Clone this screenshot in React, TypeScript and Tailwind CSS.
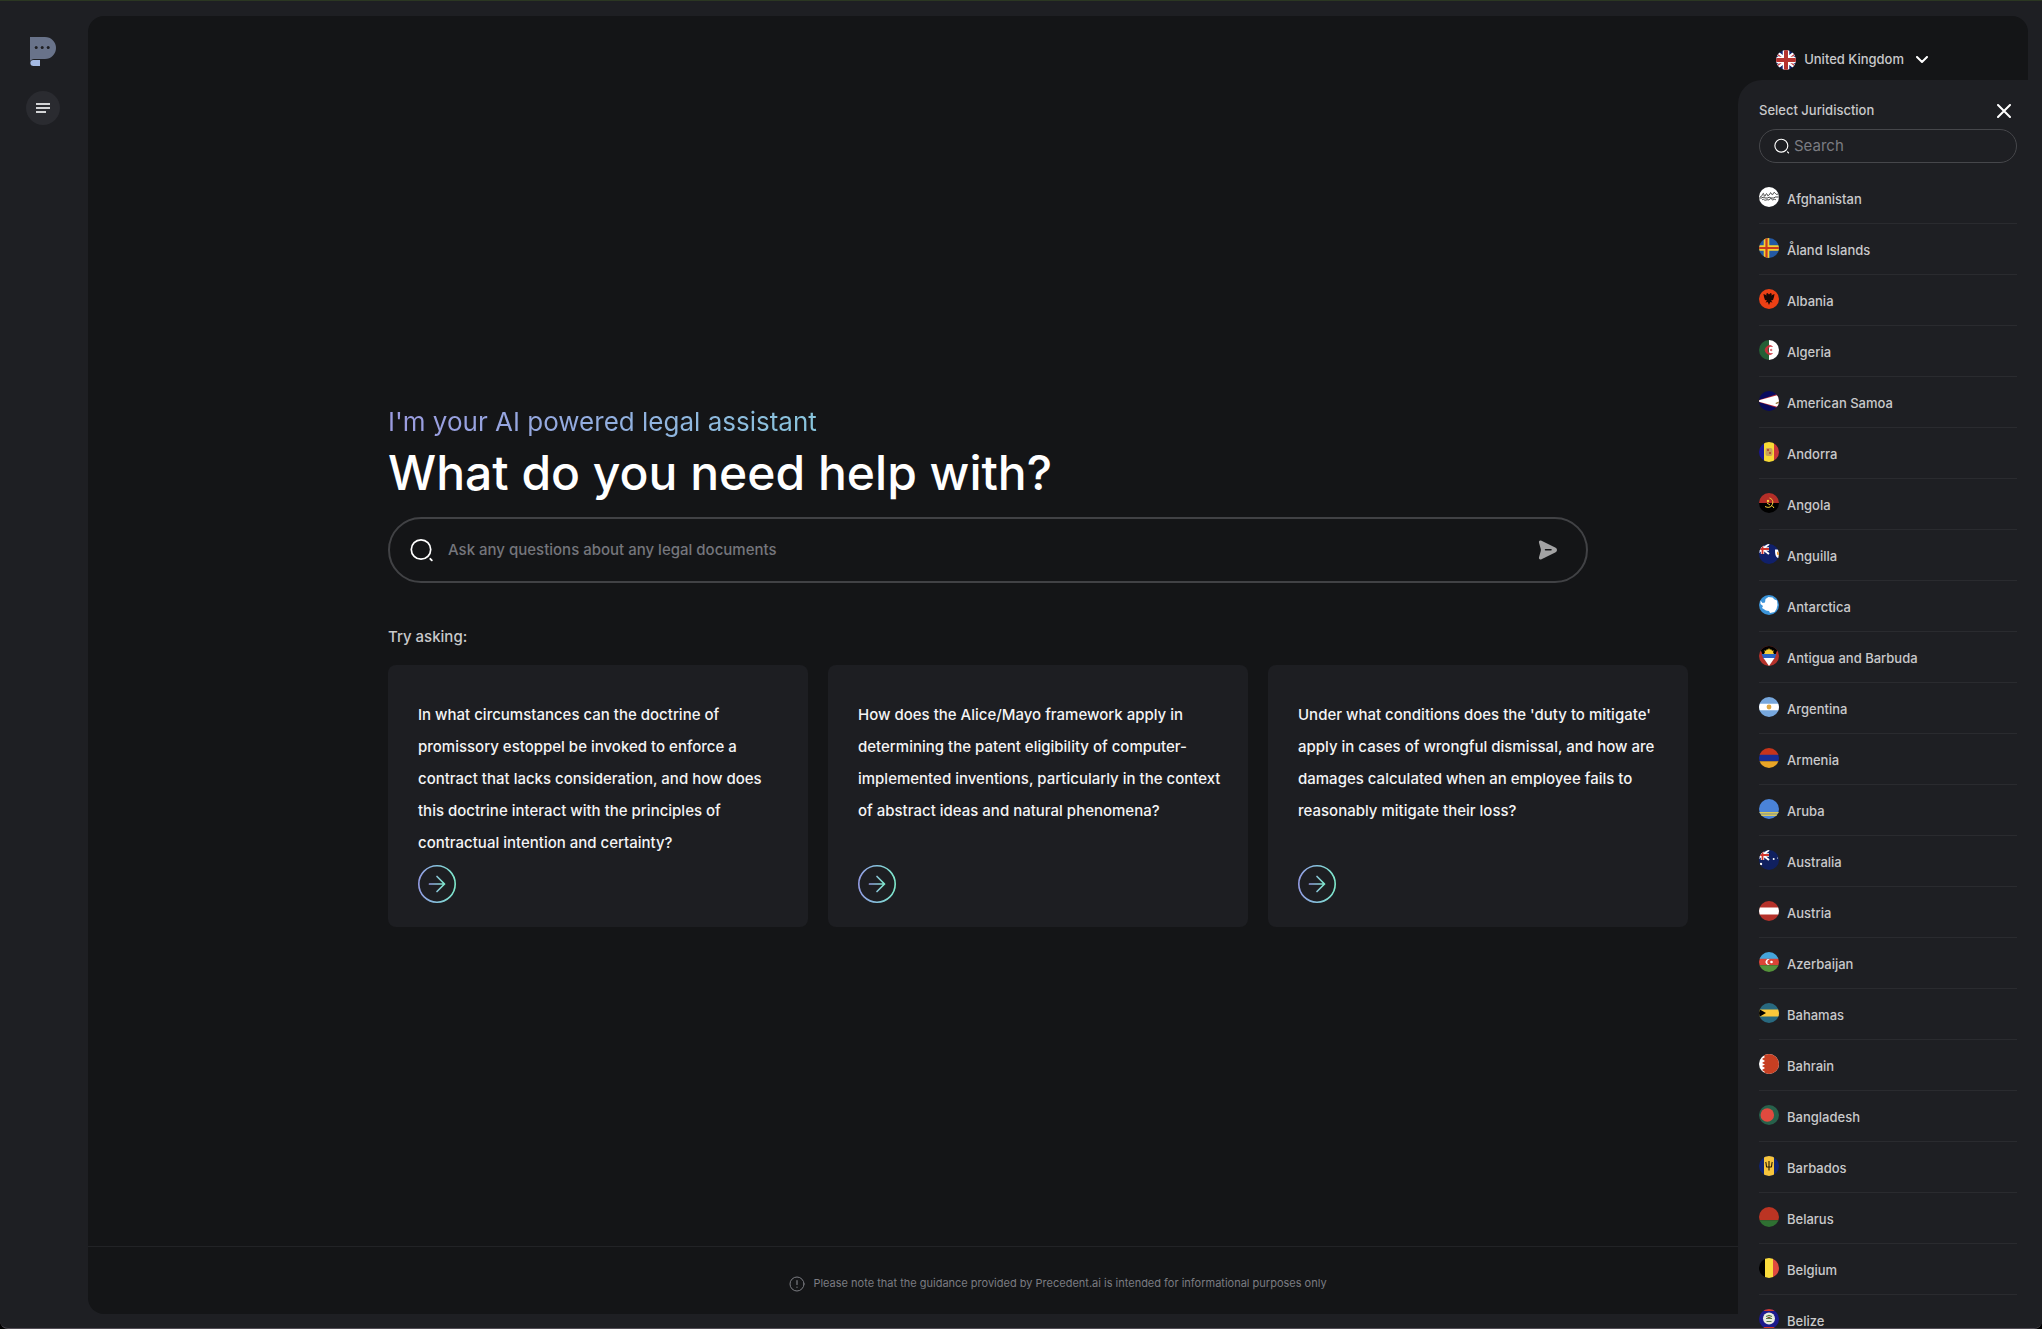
import { useState } from 'react';
import type { ReactNode } from 'react';

type Country = { name: string; flag: ReactNode };

// Top left quarter of the blue ensigns
const Canton = () => (
  <g>
    <path d="M-3 0h13v10h-13z" fill="#10206b" />
    <path d="M-3 0l13 10M10 0l-13 10" stroke="#fff" strokeWidth="2" />
    <path d="M3.500 0v10M-3 5h13" stroke="#fff" strokeWidth="3.400" />
    <path d="M3.500 0v10M-3 5h13" stroke="#d0342c" strokeWidth="1.800" />
  </g>
);

// Flags are drawn on a 20x20 square and clipped to a circle
const COUNTRIES: Country[] = [
  {
    name: 'Afghanistan',
    flag: (
      <>
        <path d="M0 0h20v20H0z" fill="#fff" />
        <path
          d="M1 9.500c2 1 2-2 3-3s1 4 2 2.500 1-3 2-2 0 3 2 1 1-3 2-2 1 3 2 1 1-2 2-1 1 2 3 1M0 11h3l1-1 2 1h3l1-1 2 1h3l1-1h4M3 13c2-2 2 1 4 0s2 1 4-1 2 2 3 1 2-1 3 0"
          stroke="#333"
          strokeWidth="0.900"
          fill="none"
        />
      </>
    ),
  },
  {
    name: 'Åland Islands',
    flag: (
      <>
        <path d="M0 0h20v20H0z" fill="#2459a3" />
        <path d="M7.500 0v20M0 10h20" stroke="#f6cf2f" strokeWidth="5.600" />
        <path d="M7.500 0v20M0 10h20" stroke="#c93a1e" strokeWidth="2.200" />
      </>
    ),
  },
  {
    name: 'Albania',
    flag: (
      <>
        <path d="M0 0h20v20H0z" fill="#ec4015" />
        <path
          d="M10 5.500L8.500 4 7 5 8 6.500 4.500 5 5 8l1 3 2 .5-1.500 2 2.200-.5L10 16l1.300-3 2.200.5-1.500-2 2-.5 1-3 .5-3L12 6.500 13 5l-1.500-1z"
          fill="#1a0805"
        />
      </>
    ),
  },
  {
    name: 'Algeria',
    flag: (
      <>
        <path d="M0 0h10v20H0z" fill="#245f35" />
        <path d="M10 0h10v20H10z" fill="#fff" />
        <path d="M13.500 6.500a4.500 4.500 0 1 0 0 7 3.700 3.700 0 1 1 0-7z" fill="#c9303a" stroke="#c9303a" strokeWidth="0.600" />
        <path d="M13.800 10l-3 1 1.800-2.500v3L10.800 9z" fill="#c9303a" />
      </>
    ),
  },
  {
    name: 'American Samoa',
    flag: (
      <>
        <path d="M0 0h20v20H0z" fill="#080a5e" />
        <path d="M-3 10L20 2.500v15z" fill="#b32a36" />
        <path d="M-3 10L20 3.800v12.400z" fill="#fff" />
        <path d="M16.500 12l3.500-1.500v1.500l-3 1z" fill="#8a6a28" />
      </>
    ),
  },
  {
    name: 'Andorra',
    flag: (
      <>
        <path d="M0 0h5v20H0z" fill="#1b1793" />
        <path d="M5 0h10v20H5z" fill="#f7d936" />
        <path d="M15 0h5v20h-5z" fill="#c9353a" />
        <rect x="6.500" y="6" width="7" height="8" rx="2" fill="#c9a05a" />
        <path d="M8 7h2v2H8zM10 10h2v2h-2z" fill="#b2552f" />
      </>
    ),
  },
  {
    name: 'Angola',
    flag: (
      <>
        <path d="M0 0h20v10H0z" fill="#b32e28" />
        <path d="M0 10h20v10H0z" fill="#000" />
        <path d="M10.500 5c4 1 4.500 6 1 8.500M6 13.500c3 1.500 5 1 7-1l2 2.500M8 10l3 2" stroke="#f3cf3a" strokeWidth="1" fill="none" />
        <circle cx="9" cy="8" r="1.200" fill="#f3cf3a" />
      </>
    ),
  },
  {
    name: 'Anguilla',
    flag: (
      <>
        <path d="M0 0h20v20H0z" fill="#10206b" />
        <Canton />
        <path d="M16 5.500h4v9c-3-1-4-3-4-9z" fill="#fff" />
        <path d="M18 7.500l2 1v3l-2-1z" fill="#e59a3a" />
      </>
    ),
  },
  {
    name: 'Antarctica',
    flag: (
      <>
        <path d="M0 0h20v20H0z" fill="#3b94d9" />
        <path
          d="M1.500 5.500l2 2.500L6 7.500 6.500 4 9.500 2l4 .5 2 2 2.500 1L18.500 10l-1 4-2 3-4.500 1-1-2-3-.5-4-2.500 1-2-2.500-2z"
          fill="#fff"
        />
      </>
    ),
  },
  {
    name: 'Antigua and Barbuda',
    flag: (
      <>
        <path d="M0 0h20v20H0z" fill="#b5322b" />
        <path d="M0 0h20L15 12H5z" fill="#000" />
        <path d="M5 8l1-2-1-1.500 2 .2L8 3l1 1 1-2 1 2 1-1 1 1.700 2-.2L14 6l1 2z" fill="#f7cf35" />
        <path d="M2.500 8h15l-2.200 5H4.700z" fill="#2a64c5" />
        <path d="M4.500 12h11L10 20z" fill="#fff" />
      </>
    ),
  },
  {
    name: 'Argentina',
    flag: (
      <>
        <path d="M0 0h20v20H0z" fill="#77a7dd" />
        <path d="M0 6.700h20v6.600H0z" fill="#fff" />
        <circle cx="10" cy="10" r="2.400" fill="#dca645" />
      </>
    ),
  },
  {
    name: 'Armenia',
    flag: (
      <>
        <path d="M0 0h20v7H0z" fill="#c7341b" />
        <path d="M0 6.700h20v6.600H0z" fill="#182c94" />
        <path d="M0 13.300h20V20H0z" fill="#e9a526" />
      </>
    ),
  },
  {
    name: 'Aruba',
    flag: (
      <>
        <path d="M0 0h20v20H0z" fill="#4a83d8" />
        <path d="M0 13h20v4H0z" fill="#a8ab78" />
        <path d="M0 13.500h20M0 16.500h20" stroke="#d9c85a" />
      </>
    ),
  },
  {
    name: 'Australia',
    flag: (
      <>
        <path d="M0 0h20v20H0z" fill="#10205f" />
        <Canton />
        <circle cx="14.700" cy="9" r="1" fill="#fff" />
        <circle cx="2" cy="14" r="1.200" fill="#fff" />
        <circle cx="18.500" cy="8" r=".5" fill="#fff" />
      </>
    ),
  },
  {
    name: 'Austria',
    flag: (
      <>
        <path d="M0 0h20v20H0z" fill="#b5322b" />
        <path d="M0 6.500h20v7H0z" fill="#fff" />
      </>
    ),
  },
  {
    name: 'Azerbaijan',
    flag: (
      <>
        <path d="M0 0h20v7H0z" fill="#45a5dc" />
        <path d="M0 6.700h20v6.600H0z" fill="#dc4436" />
        <path d="M0 13.300h20V20H0z" fill="#54923a" />
        <path d="M10.800 7.500a2.900 2.900 0 1 0 0 5 2.300 2.300 0 1 1 0-5z" fill="#fff" />
        <circle cx="12.500" cy="10" r="1.300" fill="#fff" />
      </>
    ),
  },
  {
    name: 'Bahamas',
    flag: (
      <>
        <path d="M0 0h20v20H0z" fill="#28697f" />
        <path d="M0 6.500h20v7H0z" fill="#f9c83a" />
        <path d="M0 6l7 4-7 4z" fill="#000" />
      </>
    ),
  },
  {
    name: 'Bahrain',
    flag: (
      <>
        <path d="M0 0h20v20H0z" fill="#fff" />
        <path d="M20 0H3l3 3-3 2 3 2-3 2 3 1.500-3 1.500 3 2-3 2 3 2-3 2h17z" fill="#c73f22" />
      </>
    ),
  },
  {
    name: 'Bangladesh',
    flag: (
      <>
        <path d="M0 0h20v20H0z" fill="#27614b" />
        <circle cx="8.300" cy="10" r="6.800" fill="#e04a3f" />
      </>
    ),
  },
  {
    name: 'Barbados',
    flag: (
      <>
        <path d="M0 0h20v20H0z" fill="#10246f" />
        <path d="M5 0h10v20H5z" fill="#f7c53c" />
        <path d="M10 5v9.500M6.700 6c.8 1.500.3 4 1 5h4.600c.7-1 .2-3.500 1-5" stroke="#221a08" strokeWidth="1.100" fill="none" />
      </>
    ),
  },
  {
    name: 'Belarus',
    flag: (
      <>
        <path d="M0 0h20v13.300H0z" fill="#bb3423" />
        <path d="M0 13.300h20V20H0z" fill="#2f7032" />
      </>
    ),
  },
  {
    name: 'Belgium',
    flag: (
      <>
        <path d="M0 0h6v20H0z" fill="#000" />
        <path d="M6 0h8v20H6z" fill="#f9db3c" />
        <path d="M14 0h6v20h-6z" fill="#df4a3e" />
      </>
    ),
  },
  {
    name: 'Belize',
    flag: (
      <>
        <path d="M0 0h20v20H0z" fill="#1d1a8c" />
        <path d="M0 0h20v2H0zM0 18h20v2H0z" fill="#cf3a2a" />
        <circle cx="10" cy="9.500" r="6" fill="#e9ece0" />
        <path d="M7 7.500l3-1 3 1M7 9.500h6M7.500 12.500h5" stroke="#557a48" strokeWidth="1.200" fill="none" />
        <path d="M8.500 8.500h3" stroke="#8a4a30" strokeWidth="1.200" />
      </>
    ),
  },
];

const UK_FLAG = (
  <>
    <path d="M0 0h20v20H0z" fill="#13216b" />
    <path d="M-3 0l26 20M23 0L-3 20" stroke="#fff" strokeWidth="4" />
    <path d="M-3 1l10 7.700M23 19l-10-7.700M23 1l-10 7.700M-3 19l10-7.700" stroke="#c2343a" strokeWidth="1.200" />
    <path d="M10 0v20M0 10h20" stroke="#fff" strokeWidth="6.600" />
    <path d="M10 0v20M0 10h20" stroke="#b5322f" strokeWidth="4" />
  </>
);

const QUESTIONS = [
  'In what circumstances can the doctrine of promissory estoppel be invoked to enforce a contract that lacks consideration, and how does this doctrine interact with the principles of contractual intention and certainty?',
  'How does the Alice/Mayo framework apply in determining the patent eligibility of computer-implemented inventions, particularly in the context of abstract ideas and natural phenomena?',
  "Under what conditions does the 'duty to mitigate' apply in cases of wrongful dismissal, and how are damages calculated when an employee fails to reasonably mitigate their loss?",
];

const Flag = ({ children }: { children: ReactNode }) => (
  <svg viewBox="0 0 20 20" className="w-5 h-5 shrink-0 rounded-full" aria-hidden="true">
    {children}
  </svg>
);

const SearchIcon = ({ className }: { className: string }) => (
  <svg viewBox="0 0 24 24" className={className} fill="none" stroke="currentColor" strokeLinecap="round" aria-hidden="true">
    <circle cx="11" cy="11.500" r="9.700" strokeWidth="1.700" />
    <path d="M20.300 20.800l1.500 1.500" strokeWidth="1.900" />
  </svg>
);

const Logo = () => (
  <svg viewBox="0 0 26 29" className="w-[26px] h-[29px]" aria-hidden="true">
    <path d="M0 0h15a11 11 0 0 1 0 22H4c-2 0-3 1-4 2z" fill="#69738a" />
    <path d="M3.500 23H10v6H3.500C1.500 29 .3 27.700.3 26s1.200-3 3.200-3z" fill="#a4b9e2" />
    <g fill="#1e1f23">
      <circle cx="6.200" cy="10.500" r="1.500" />
      <circle cx="12.200" cy="10.500" r="1.500" />
      <circle cx="18.200" cy="10.500" r="1.500" />
    </g>
  </svg>
);

const ArrowCircle = ({ id }: { id: string }) => (
  <svg viewBox="0 0 38 38" className="w-[38px] h-[38px]" fill="none" aria-hidden="true">
    <defs>
      <linearGradient id={id} x1="0" y1="0" x2="38" y2="0" gradientUnits="userSpaceOnUse">
        <stop offset="0" stopColor="#939be3" />
        <stop offset="0.500" stopColor="#86c2dc" />
        <stop offset="1" stopColor="#7eebcb" />
      </linearGradient>
      <linearGradient id={`${id}-arrow`} x1="11" y1="0" x2="27" y2="0" gradientUnits="userSpaceOnUse">
        <stop offset="0" stopColor="#939be3" />
        <stop offset="1" stopColor="#7eebcb" />
      </linearGradient>
    </defs>
    <circle cx="19" cy="19" r="18.200" stroke={`url(#${id})`} strokeWidth="1.600" />
    <path
      d="M11.500 19h15M19 11.500l7.500 7.500-7.500 7.500"
      stroke={`url(#${id}-arrow)`}
      strokeWidth="1.700"
      strokeLinecap="round"
      strokeLinejoin="round"
    />
  </svg>
);

function App() {
  const [open, setOpen] = useState(true);
  const [search, setSearch] = useState('');
  const [question, setQuestion] = useState('');

  const filtered = COUNTRIES.filter((c) => c.name.toLowerCase().includes(search.toLowerCase()));

  return (
    <div className="bg-black font-['Inter',sans-serif]">
      <div className="relative flex h-screen overflow-hidden rounded-b-lg border-t border-b border-t-[#2b3722] border-b-[#524d55] bg-[#1e1f23]">
        {/* Sidebar */}
        <aside className="flex w-[88px] shrink-0 flex-col items-center gap-[25px] pt-9 pr-0.5">
          <Logo />
          <button
            aria-label="Open menu"
            className="flex h-[34px] w-[34px] items-center justify-center rounded-full bg-[#2a2b30]"
          >
            <svg viewBox="0 0 14 10" className="h-2.5 w-3.5" stroke="#d3d4d6" strokeWidth="2" aria-hidden="true">
              <path d="M0 1h14M0 5h14M0 9h10" />
            </svg>
          </button>
        </aside>

        <main className="mt-[15px] mr-3.5 mb-3.5 flex min-w-0 flex-1 flex-col rounded-2xl bg-[#141517]">
          <header className="flex h-[88px] shrink-0 items-center justify-end pr-[100px]">
            <button onClick={() => setOpen(!open)} className="flex items-center gap-2 text-[13px] font-medium text-[#c9c9cb]">
              <Flag>{UK_FLAG}</Flag>
              United Kingdom
              <svg viewBox="0 0 12 8" className="ml-1 h-2 w-3" fill="none" stroke="#fff" strokeWidth="2" strokeLinecap="round" strokeLinejoin="round" aria-hidden="true">
                <path d="M1 1l5 5 5-5" />
              </svg>
            </button>
          </header>

          <section className="mx-auto flex w-full max-w-[1340px] flex-1 flex-col justify-center pb-5">
            <p className="w-fit bg-gradient-to-r from-[#9b9be0] via-[#92aee0] to-[#88c4dc] bg-clip-text text-[26px] leading-[38px] text-transparent">
              I'm your AI powered legal assistant
            </p>
            <h1 className="text-5xl leading-16 font-medium text-white">What do you need help with?</h1>

            <form
              onSubmit={(e) => e.preventDefault()}
              className="mt-3 flex h-[66px] w-full max-w-[1200px] items-center rounded-full border-2 border-[#414245] pr-6 pl-5"
            >
              <SearchIcon className="h-6 w-6 text-white" />
              <input
                aria-label="Ask a question"
                value={question}
                onChange={(e) => setQuestion(e.target.value)}
                placeholder="Ask any questions about any legal documents"
                className="ml-3.5 min-w-0 flex-1 bg-transparent text-[15px] font-medium text-white outline-none placeholder:text-[#75767c]"
              />
              <button aria-label="Send" className="p-1">
                <svg viewBox="0 0 20 20" className="h-5 w-5" aria-hidden="true">
                  <path
                    d="M3.500.8l13.700 6.700c2.400 1.200 2.400 3.800 0 5L3.500 19.200C1.800 20 .6 19 1 17.300l1.700-6a4 4 0 0 0 0-2.600L1 2.700C.6 1 1.800 0 3.500.8z"
                    fill="#a3a3a4"
                  />
                  <path d="M7.500 9.700h5.500" stroke="#141517" strokeWidth="1.500" strokeLinecap="round" />
                </svg>
              </button>
            </form>

            <h2 className="mt-[42px] text-[15px] leading-6 font-medium text-[#c9c9cb]">Try asking:</h2>
            <div className="mt-4 grid grid-cols-3 gap-5 pr-10">
              {QUESTIONS.map((q, i) => (
                <button
                  key={i}
                  onClick={() => setQuestion(q)}
                  className="flex min-h-[262px] flex-col items-start justify-between rounded-lg bg-[#1d1e22] pt-[34px] pr-5 pb-6 pl-[30px] text-left text-[15px] leading-8 font-medium text-[#f4f4f5]"
                >
                  {q}
                  <ArrowCircle id={`arrow-${i}`} />
                </button>
              ))}
            </div>
          </section>

          <footer className="flex h-[68px] shrink-0 items-center justify-center gap-2 border-t border-[#222326] pt-1.5 text-[11px] text-[#7b7c82]">
            <svg viewBox="0 0 16 16" className="h-4 w-4" fill="none" stroke="currentColor" strokeLinecap="round" aria-hidden="true">
              <circle cx="8" cy="8" r="7" />
              <path d="M8 4.500v4M8 11v.3" strokeWidth="1.200" />
            </svg>
            Please note that the guidance provided by Precedent.ai is intended for informational purposes only
          </footer>
        </main>

        {/* Jurisdiction drawer */}
        {open && (
          <aside className="absolute top-[79px] right-0 bottom-0 flex w-[304px] flex-col rounded-tl-3xl bg-[#1e1f23] pr-[25px] pl-[21px] text-[#c9c9cb]">
            <div className="flex h-[49px] shrink-0 items-center justify-between pt-3 pr-1.5">
              <h2 className="text-[13px] font-medium">Select Juridisction</h2>
              <button aria-label="Close" onClick={() => setOpen(false)}>
                <svg viewBox="0 0 14 14" className="h-3.5 w-3.5" stroke="#fff" strokeWidth="2" strokeLinecap="round" aria-hidden="true">
                  <path d="M1 1l12 12M13 1L1 13" />
                </svg>
              </button>
            </div>
            <label className="flex h-[34px] shrink-0 items-center gap-1 rounded-full border border-[#46474b] px-3.5">
              <SearchIcon className="h-4 w-4 shrink-0 text-white" />
              <input
                aria-label="Search"
                value={search}
                onChange={(e) => setSearch(e.target.value)}
                placeholder="Search"
                className="min-w-0 flex-1 bg-transparent text-[15px] text-white outline-none placeholder:text-[#7b7c82]"
              />
            </label>
            <ul className="mt-2.5 min-h-0 flex-1 overflow-y-auto [scrollbar-width:none]">
              {filtered.map((c) => (
                <li key={c.name} className="border-b border-[#2a2b2f]">
                  <button className="flex h-[50px] w-full items-start gap-2 pt-3.5 text-[13px] leading-6 font-medium">
                    <Flag>{c.flag}</Flag>
                    {c.name}
                  </button>
                </li>
              ))}
            </ul>
          </aside>
        )}
      </div>
    </div>
  );
}

export default App;
